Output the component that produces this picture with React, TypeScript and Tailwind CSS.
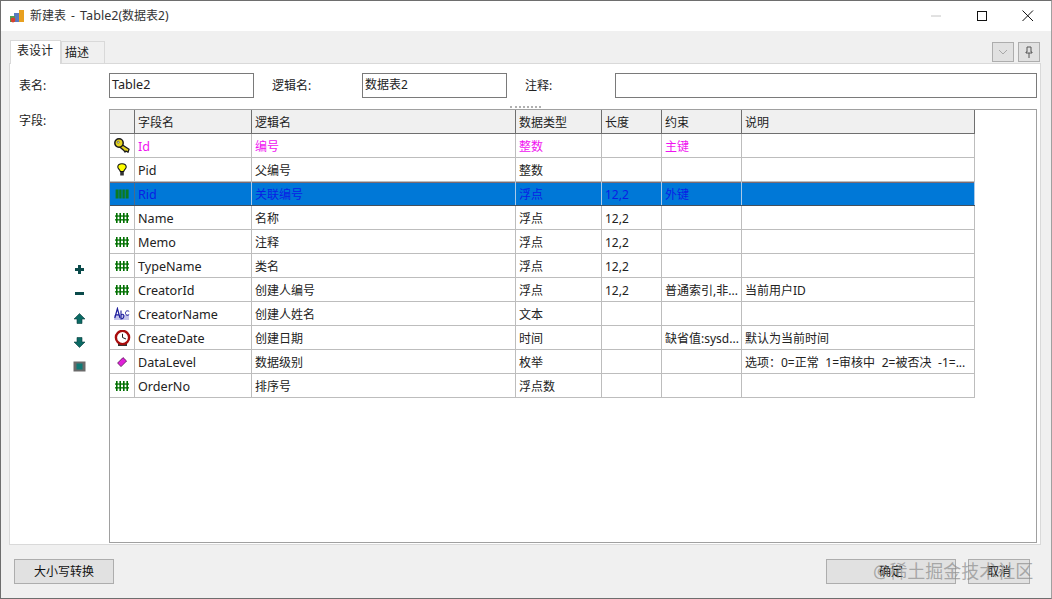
const FONT = "font-['Noto_Sans','Noto_Sans_CJK_SC',sans-serif]";

type Field = {
  icon: "key" | "bulb" | "hash" | "abc" | "clock" | "diamond";
  name: string;
  logical: string;
  type: string;
  length?: string;
  constraint?: string;
  note?: string;
  tone?: "pk" | "selected";
};

const FIELDS: Field[] = [
  { icon: "key", name: "Id", logical: "编号", type: "整数", constraint: "主键", tone: "pk" },
  { icon: "bulb", name: "Pid", logical: "父编号", type: "整数" },
  { icon: "hash", name: "Rid", logical: "关联编号", type: "浮点", length: "12,2", constraint: "外键", tone: "selected" },
  { icon: "hash", name: "Name", logical: "名称", type: "浮点", length: "12,2" },
  { icon: "hash", name: "Memo", logical: "注释", type: "浮点", length: "12,2" },
  { icon: "hash", name: "TypeName", logical: "类名", type: "浮点", length: "12,2" },
  { icon: "hash", name: "CreatorId", logical: "创建人编号", type: "浮点", length: "12,2", constraint: "普通索引,非...", note: "当前用户ID" },
  { icon: "abc", name: "CreatorName", logical: "创建人姓名", type: "文本" },
  { icon: "clock", name: "CreateDate", logical: "创建日期", type: "时间", constraint: "缺省值:sysd...", note: "默认为当前时间" },
  { icon: "diamond", name: "DataLevel", logical: "数据级别", type: "枚举", note: "选项：0=正常 1=审核中 2=被否决 -1=..." },
  { icon: "hash", name: "OrderNo", logical: "排序号", type: "浮点数" },
];

const COLS = "grid w-[865px] grid-cols-[25px_117px_264px_86px_60px_80px_233px]";

function FieldIcon({ icon, selected }: { icon: Field["icon"]; selected?: boolean }) {
  if (icon === "key")
    return (
      <svg width="16" height="15" viewBox="0 0 16 15">
        <path d="M7 6 L15 11.3 L14 14.2 L12 13 L11 14 L9.6 12.2 L5.5 8.8 Z" fill="#e2d01a" stroke="#1a1a1a" strokeWidth="1.3" />
        <circle cx="5" cy="5" r="4.2" fill="#e6d51e" stroke="#1a1a1a" strokeWidth="1.5" />
        <circle cx="4.2" cy="4.2" r="1" fill="#fff" stroke="#333" strokeWidth="0.6" />
      </svg>
    );
  if (icon === "bulb")
    return (
      <svg width="10" height="13" viewBox="0 0 10 13">
        <path d="M5 0.7 C2 0.7 0.8 2.4 0.8 4 C0.8 5.8 3 6.8 3.3 8.5 L6.7 8.5 C7 6.8 9.2 5.8 9.2 4 C9.2 2.4 8 0.7 5 0.7 Z" fill="#ffff00" stroke="#111" strokeWidth="1.1" />
        <rect x="3.2" y="9" width="3.6" height="3.5" fill="#333" />
      </svg>
    );
  if (icon === "hash")
    return (
      <svg width="14" height="10" viewBox="0 0 14 10">
        {selected ? (
          <g fill="#0a7a20">
            <rect x="0.6" y="0.5" width="3" height="9" />
            <rect x="4.2" y="0.5" width="2.4" height="9" />
            <rect x="7.4" y="0.5" width="2.4" height="9" />
            <rect x="10.6" y="0.5" width="3" height="9" />
          </g>
        ) : (
          <g fill="#007000">
            <rect x="1" y="0" width="1.6" height="10" />
            <rect x="4.4" y="0" width="1.6" height="10" />
            <rect x="8" y="0" width="1.6" height="10" />
            <rect x="11.4" y="0" width="1.6" height="10" />
            <rect x="0" y="2.4" width="14" height="1.3" />
            <rect x="0" y="6.2" width="14" height="1.3" />
          </g>
        )}
      </svg>
    );
  if (icon === "abc")
    return (
      <svg width="16" height="14" viewBox="0 0 16 14">
        <rect x="0" y="8" width="15" height="5" fill="#c4c4ec" />
        <path d="M0.8 11 L3.4 1.5 L6 11 M1.8 7.8 H5" fill="none" stroke="#1c1c9c" strokeWidth="1.2" />
        <path d="M7 3.5 V12.5 M7 8 C9.5 6 10.5 8.5 9.5 10.5 C9 11.5 8 12 7 11.5" fill="none" stroke="#1c1c9c" strokeWidth="1.1" />
        <path d="M15.2 4.5 C13 2.8 11.2 4.5 11.5 6.5 C11.8 8.5 13.8 8.8 15.2 7.5" fill="none" stroke="#1c1c9c" strokeWidth="1" />
      </svg>
    );
  if (icon === "clock")
    return (
      <svg width="17" height="16" viewBox="0 0 17 16">
        <rect x="4" y="13" width="9" height="3" fill="#333" />
        <circle cx="8.5" cy="7.5" r="6.6" fill="#fff" stroke="#a80c0c" strokeWidth="2.4" />
        <path d="M8.5 7.5 V3.8 M8.5 7.5 L12 9" stroke="#222" strokeWidth="1" fill="none" />
      </svg>
    );
  return (
    <svg width="10" height="10" viewBox="0 0 10 10">
      <path d="M6 0.6 L9.6 4 L4 9.6 L0.6 6 Z" fill="#e020d8" stroke="#501050" strokeWidth="0.8" />
    </svg>
  );
}

function SideButton({ kind }: { kind: "plus" | "minus" | "up" | "down" | "stop" }) {
  return (
    <div className={`flex h-[24px] items-center justify-center ${kind === "minus" ? "mb-px" : ""}`}>
      <svg width="13" height="13" viewBox="0 0 13 13">
        {kind === "plus" && <path d="M5 2 H8 V5 H11 V8 H8 V11 H5 V8 H2 V5 H5 Z" fill="#0a4a4a" />}
        {kind === "minus" && <rect x="2" y="5" width="9" height="3" fill="#0a4a4a" />}
        {kind === "up" && <path d="M6.5 1.5 L12 7 H9 V11.5 H4 V7 H1 Z" fill="#0b6a64" stroke="#0a3c3c" strokeWidth="0.6" />}
        {kind === "down" && <path d="M4 1.5 H9 V6 H12 L6.5 11.5 L1 6 H4 Z" fill="#0b6a64" stroke="#0a3c3c" strokeWidth="0.6" />}
        {kind === "stop" && (
          <>
            <rect x="0.5" y="1.5" width="12" height="10" fill="#6a6a6a" />
            <rect x="3.5" y="3.5" width="6" height="6" fill="#0f7a76" />
          </>
        )}
      </svg>
    </div>
  );
}

function Cell({ children, className = "" }: { children?: React.ReactNode; className?: string }) {
  return <div className={`overflow-hidden whitespace-nowrap px-[3px] leading-[25px] ${className}`}>{children}</div>;
}

function FieldRow({ field }: { field: Field }) {
  const selected = field.tone === "selected";
  const color = field.tone === "pk" ? "text-[#f012f0]" : selected ? "text-[#0a1ee6]" : "text-[#222]";
  const line = selected ? "border-[#a9c9e8]" : "border-[#bdbdbd]";
  return (
    <div
      className={`${COLS} h-[24px] border-b ${color} ${
        selected ? "border-b-[#44505c] bg-[#0078d7] shadow-[inset_0_1px_0_#7a6a72]" : "border-b-[#bdbdbd] bg-white"
      }`}
    >
      <div className={`flex items-center justify-center border-r ${selected ? "border-[#4a6a8a]" : line}`}>
        <FieldIcon icon={field.icon} selected={selected} />
      </div>
      <Cell className={`border-r text-[12.6px] ${line}`}>{field.name}</Cell>
      <Cell className={`border-r ${line}`}>{field.logical}</Cell>
      <Cell className={`border-r ${line}`}>{field.type}</Cell>
      <Cell className={`border-r ${line}`}>{field.length}</Cell>
      <Cell className={`border-r ${line}`}>{field.constraint}</Cell>
      <Cell className={`border-r [word-spacing:3.5px] ${line}`}>{field.note}</Cell>
    </div>
  );
}

function TextBox({ value, className }: { value?: string; className: string }) {
  return <div className={`h-[25px] border border-[#7a7a7a] bg-white px-[2px] leading-[22px] ${className}`}>{value}</div>;
}

function ActionButton({ label, className }: { label: string; className: string }) {
  return (
    <div className={`flex h-[25px] items-center justify-center border border-[#adadad] bg-[#e1e1e1] text-[#111] ${className}`}>
      {label}
    </div>
  );
}

export default function App() {
  return (
    <div className={`${FONT} relative flex h-[599px] w-[1052px] flex-col overflow-hidden border border-[#6e6e6e] border-r-[#a0a0a0] bg-[#f0f0f0] text-[12px] text-[#222]`}>
      {/* title bar */}
      <div className="flex h-[30px] shrink-0 items-center bg-white">
        <svg className="ml-[8px]" width="16" height="16" viewBox="0 0 16 16">
          <rect x="10" y="2" width="5" height="12" fill="#e8a020" />
          <rect x="5" y="5" width="5" height="9" fill="#5a7ac0" />
          <rect x="1" y="8" width="5" height="6" fill="#50a050" />
          <circle cx="4" cy="12" r="2.4" fill="#d84030" />
        </svg>
        <span className="ml-[5px] text-[#333] [word-spacing:2px]">
          新建表 - <span className="text-[12.6px]">Table2</span>(数据表2)
        </span>
        <div className="ml-auto flex items-center">
          <svg width="46" height="30" viewBox="0 0 46 30"><path d="M18 15 H28" stroke="#c4c4c4" /></svg>
          <svg width="46" height="30" viewBox="0 0 46 30"><rect x="18.5" y="10.5" width="9" height="9" fill="none" stroke="#111" /></svg>
          <svg width="46" height="30" viewBox="0 0 46 30"><path d="M17.5 9.5 L28 20 M28 9.5 L17.5 20" stroke="#111" /></svg>
        </div>
      </div>

      {/* tabs */}
      <div className="flex h-[32px] shrink-0 items-end justify-between pl-[9px] pr-[11px]">
        <div className="flex items-end">
          <div className="relative top-px flex h-[24px] w-[51px] items-center justify-center border border-b-0 border-[#d9d9d9] bg-white pb-[3px] pr-[1px]">表设计</div>
          <div className="flex h-[22px] w-[44px] items-center border border-b-0 border-[#d9d9d9] bg-[#f0f0f0] pl-[3px]">描述</div>
        </div>
        <div className="mb-[1px] flex gap-[4px]">
          <div className="flex h-[20px] w-[22px] items-center justify-center border border-[#adadad] bg-[#e1e1e1]">
            <svg width="10" height="6" viewBox="0 0 10 6"><path d="M1 1 L5 5 L9 1" fill="none" stroke="#a8a8a8" /></svg>
          </div>
          <div className="flex h-[20px] w-[22px] items-center justify-center border border-[#adadad] bg-[#e1e1e1]">
            <svg width="8" height="12" viewBox="0 0 8 12"><path d="M2 1 H6 V6 H7 V7 H1 V6 H2 Z M4 7 V12" fill="none" stroke="#555" /></svg>
          </div>
        </div>
      </div>

      {/* tab panel */}
      <div className="ml-[8px] mr-[10px] flex h-[482px] shrink-0 flex-col border border-[#d9d9d9] bg-white">
        <div className="flex h-[34px] shrink-0 items-start pl-[9px] pt-[9px]">
          <span className="w-[90px] leading-[25px]">表名:</span>
          <TextBox value="Table2" className="w-[145px] text-[12.6px]" />
          <span className="ml-[18px] w-[90px] leading-[25px]">逻辑名:</span>
          <TextBox value="数据表2" className="w-[145px]" />
          <span className="ml-[18px] w-[90px] leading-[25px]">注释:</span>
          <TextBox className="w-[422px]" />
        </div>
        <div className="flex h-[11px] shrink-0 items-center justify-center pt-[6px]">
          <div className="h-px w-[31px] border-t-2 border-dotted border-[#b0b0b0]" />
        </div>
        <div className="flex min-h-0 flex-1 pb-[1px] pl-[9px]">
          <div className="flex w-[90px] shrink-0 flex-col">
            <span className="leading-[24px]">字段:</span>
            <div className="ml-[45px] mt-[124px] w-[30px]">
              <SideButton kind="plus" />
              <SideButton kind="minus" />
              <SideButton kind="up" />
              <SideButton kind="down" />
              <SideButton kind="stop" />
            </div>
          </div>
          <div className="w-[928px] border border-[#a0a0a0] bg-white">
            <div className={`${COLS} h-[24px] border-b border-b-[#6f6f6f] bg-[#f0f0f0]`}>
              <div className="border-r border-[#6f6f6f]" />
              {["字段名", "逻辑名", "数据类型", "长度", "约束", "说明"].map((h) => (
                <Cell key={h} className="border-r border-[#6f6f6f]">{h}</Cell>
              ))}
            </div>
            {FIELDS.map((f) => (
              <FieldRow key={f.name} field={f} />
            ))}
          </div>
        </div>
      </div>

      {/* footer */}
      <div className="relative flex flex-1 items-start pl-[13px] pt-[14px]">
        <ActionButton label="大小写转换" className="w-[100px]" />
        <ActionButton label="确定" className="ml-[712px] w-[130px]" />
        <ActionButton label="取消" className="ml-[12px] w-[62px]" />
      </div>

      {/* watermark */}
      <div className="pointer-events-none absolute left-[872px] top-[557px] whitespace-nowrap text-[18px] leading-[26px] text-[#8c8c8c]/70">
        @稀土掘金技术社区
      </div>
    </div>
  );
}
